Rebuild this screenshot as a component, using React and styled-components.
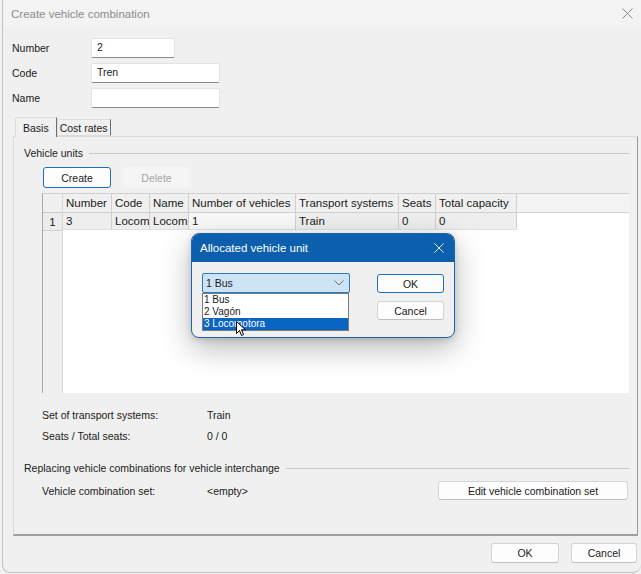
import styled, { createGlobalStyle } from "styled-components";

const GlobalStyle = createGlobalStyle`
  html, body { margin: 0; padding: 0; background: #f2f2f2; }
  body { font-family: "Liberation Sans", Arial, sans-serif; color: #1a1a1a; }
`;

const Window = styled.div`
  position: relative;
  box-sizing: border-box;
  margin-left: 2px;
  width: 639px;
  height: 573px;
  background: #f0f0f0;
  border: 1px solid #c2c2c2;
  border-top: none;
  border-right: none;
  border-radius: 0 0 8px 8px;
  display: flex;
  flex-direction: column;
`;

const TitleBar = styled.div`
  height: 27px;
  flex-shrink: 0;
  background: #f3f3f3;
  display: flex;
  align-items: center;
  justify-content: space-between;
  padding: 0 8px 0 8px;
  font-size: 11.5px;
  color: #8c8c8c;
`;

const CloseGlyph = ({ color = "#8a8a8a", size = 11 }) => (
  <svg width={size} height={size} viewBox="0 0 11 11">
    <path d="M0.5 0.5 L10.5 10.5 M10.5 0.5 L0.5 10.5" stroke={color} strokeWidth="1" fill="none" />
  </svg>
);

const Form = styled.div`
  display: grid;
  grid-template-columns: 79px auto;
  row-gap: 5px;
  padding: 11px 0 0 9px;
  font-size: 10.5px;
  align-items: center;
`;

const Label = styled.div`
  color: #1a1a1a;
`;

const Field = styled.div`
  box-sizing: border-box;
  width: ${(p) => p.$w}px;
  height: 20px;
  background: #fff;
  border: 1px solid #e3e3e3;
  border-bottom: 1px solid #8a8a8a;
  border-radius: 2px;
  padding: 2px 0 0 5px;
  font-size: 10.5px;
`;

const TabStrip = styled.div`
  display: flex;
  align-items: flex-end;
  margin: 9px 0 0 12px;
  height: 19px;
  font-size: 10.5px;
  position: relative;
  z-index: 1;
`;

const Tab = styled.div`
  box-sizing: border-box;
  height: ${(p) => (p.$active ? 20 : 17)}px;
  padding: 0 ${(p) => (p.$active ? 7 : 2)}px;
  display: flex;
  align-items: center;
  background: #f0f0f0;
  border: 1px solid #dcdcdc;
  border-bottom: ${(p) => (p.$active ? "none" : "1px solid #dcdcdc")};
  border-right: 1px solid #6e6e6e;
  margin-bottom: ${(p) => (p.$active ? -1 : 0)}px;
`;

const Panel = styled.div`
  box-sizing: border-box;
  margin: 0 3px 0 10px;
  height: 400px;
  border: 1px solid #dadada;
  border-right: 1px solid #9a9a9a;
  border-bottom: 2px solid #a0a0a0;
  padding: 9px 8px 0 10px;
  display: flex;
  flex-direction: column;
  font-size: 10.5px;
`;

const Legend = styled.div`
  display: flex;
  align-items: center;
  height: 14px;
  margin-top: ${(p) => p.$top || 0}px;
  gap: 6px;
  &::after {
    content: "";
    flex: 1;
    height: 1px;
    background: #c8c8c8;
  }
`;

const ButtonRow = styled.div`
  display: flex;
  gap: 12px;
  margin: 7px 0 0 19px;
`;

const Button = styled.button`
  box-sizing: border-box;
  width: ${(p) => p.$w}px;
  height: ${(p) => p.$h || 21}px;
  font-family: "Liberation Sans", Arial, sans-serif;
  font-size: 10.5px;
  color: ${(p) => (p.$disabled ? "#a6a6a6" : "#1a1a1a")};
  background: ${(p) => (p.$disabled ? "#f5f5f5" : "#fdfdfd")};
  border: 1px solid ${(p) => (p.$primary ? "#1b6ec2" : p.$disabled ? "#f5f5f5" : "#d4d4d4")};
  border-bottom-color: ${(p) => (p.$primary ? "#1b6ec2" : p.$disabled ? "#f5f5f5" : "#c0c0c0")};
  border-radius: 3px;
  padding: 0;
`;

const TableFrame = styled.div`
  box-sizing: border-box;
  margin: 5px 0 0 18px;
  height: 200px;
  display: flex;
  border-left: 1px solid #a8a8a8;
  border-top: 1px solid #d0d0d0;
  font-size: 11.5px;
`;

const RowHeaders = styled.div`
  width: 19px;
  background: #f0f0f0;
  border-right: 1px solid #d6d6d6;
  display: flex;
  flex-direction: column;
`;

const Corner = styled.div`
  height: 18px;
  border-bottom: 1px solid #c8c8c8;
`;

const RowNum = styled.div`
  height: 17px;
  display: flex;
  align-items: center;
  justify-content: center;
  border-bottom: 1px solid #d0d0d0;
  background: #ececec;
`;

const Grid = styled.div`
  flex: 1;
  background: #fff;
  display: flex;
  flex-direction: column;
`;

const HeaderRow = styled.div`
  display: flex;
  height: 18px;
  background: #f3f3f3;
  border-bottom: 1px solid #d0d0d0;
`;

const DataRow = styled.div`
  display: flex;
  height: 17px;
`;

const Cell = styled.div`
  box-sizing: border-box;
  width: ${(p) => p.$w}px;
  flex-shrink: 0;
  padding-left: 3px;
  display: flex;
  align-items: center;
  white-space: nowrap;
  overflow: hidden;
  border-right: 1px solid #d0d0d0;
  border-bottom: ${(p) => (p.$body ? "1px solid #e0e0e0" : "none")};
  background: ${(p) => (p.$body ? (p.$edit ? "#f8f8f8" : "#eeeeee") : "#f0f0f0")};
`;

const InfoGrid = styled.div`
  display: grid;
  grid-template-columns: 165px auto;
  grid-auto-rows: 21px;
  align-items: center;
  margin: 11px 0 0 18px;
`;

const SetRow = styled.div`
  display: grid;
  grid-template-columns: 165px 1fr auto;
  align-items: center;
  margin: 6px 1px 0 18px;
`;

const Footer = styled.div`
  display: flex;
  justify-content: flex-end;
  gap: 12px;
  margin: 7px 4px 0 0;
`;

const Dialog = styled.div`
  position: absolute;
  left: 188px;
  top: 233px;
  width: 264px;
  height: 105px;
  box-sizing: border-box;
  background: #f0f0f0;
  border: 1px solid #1d64ad;
  border-radius: 8px;
  box-shadow: 0 10px 30px rgba(0, 0, 0, 0.28), 0 2px 6px rgba(0, 0, 0, 0.15);
  font-size: 10.5px;
`;

const DialogTitle = styled.div`
  height: 28px;
  background: #0b5fad;
  border-radius: 7px 7px 0 0;
  color: #fff;
  font-size: 11.5px;
  display: flex;
  align-items: center;
  justify-content: space-between;
  padding: 0 10px 0 8px;
`;

const DialogBody = styled.div`
  position: relative;
  display: flex;
  justify-content: space-between;
  padding: 11px 10px 0 10px;
`;

const Combo = styled.div`
  box-sizing: border-box;
  width: 148px;
  height: 20px;
  background: #cde4f7;
  border: 1px solid #2b79c2;
  border-radius: 2px;
  display: flex;
  align-items: center;
  justify-content: space-between;
  padding: 0 5px 0 3px;
`;

const DropList = styled.div`
  position: absolute;
  left: 10px;
  top: 31px;
  width: 147px;
  box-sizing: border-box;
  background: #fff;
  border: 1px solid #7a7a7a;
  display: flex;
  flex-direction: column;
  font-size: 10px;
`;

const DropItem = styled.div`
  height: 12px;
  line-height: 12px;
  padding-left: 1px;
  background: ${(p) => (p.$sel ? "#0a64c2" : "transparent")};
  color: ${(p) => (p.$sel ? "#fff" : "#1a1a1a")};
`;

const DialogButtons = styled.div`
  display: flex;
  flex-direction: column;
  gap: 8px;
  padding-top: 1px;
`;

const Cursor = styled.svg`
  position: absolute;
  left: 44px;
  top: 59px;
`;

const columns = [
  ["Number", 49, "3"],
  ["Code", 38, "Locom"],
  ["Name", 39, "Locom"],
  ["Number of vehicles", 107, "1", true],
  ["Transport systems", 103, "Train"],
  ["Seats", 37, "0"],
  ["Total capacity", 81, "0"],
];

export default function App() {
  return (
    <>
      <GlobalStyle />
      <Window>
        <TitleBar>
          <span>Create vehicle combination</span>
          <CloseGlyph />
        </TitleBar>

        <Form>
          <Label>Number</Label>
          <Field $w={84}>2</Field>
          <Label>Code</Label>
          <Field $w={129}>Tren</Field>
          <Label>Name</Label>
          <Field $w={129}></Field>
        </Form>

        <TabStrip>
          <Tab $active>Basis</Tab>
          <Tab>Cost rates</Tab>
        </TabStrip>

        <Panel>
          <Legend>Vehicle units</Legend>
          <ButtonRow>
            <Button $w={68} $primary>Create</Button>
            <Button $w={67} $disabled>Delete</Button>
          </ButtonRow>

          <TableFrame>
            <RowHeaders>
              <Corner />
              <RowNum>1</RowNum>
            </RowHeaders>
            <Grid>
              <HeaderRow>
                {columns.map(([h, w]) => (
                  <Cell key={h} $w={w}>{h}</Cell>
                ))}
              </HeaderRow>
              <DataRow>
                {columns.map(([h, w, v, edit]) => (
                  <Cell key={h} $w={w} $body $edit={edit}>{v}</Cell>
                ))}
              </DataRow>
            </Grid>
          </TableFrame>

          <InfoGrid>
            <span>Set of transport systems:</span>
            <span>Train</span>
            <span>Seats / Total seats:</span>
            <span>0 / 0</span>
          </InfoGrid>

          <Legend $top={15}>Replacing vehicle combinations for vehicle interchange</Legend>
          <SetRow>
            <span>Vehicle combination set:</span>
            <span>&lt;empty&gt;</span>
            <Button $w={190} $h={19}>Edit vehicle combination set</Button>
          </SetRow>
        </Panel>

        <Footer>
          <Button $w={68} $h={20}>OK</Button>
          <Button $w={66} $h={20}>Cancel</Button>
        </Footer>

        <Dialog>
          <DialogTitle>
            <span>Allocated vehicle unit</span>
            <CloseGlyph color="#ffffff" size={10} />
          </DialogTitle>
          <DialogBody>
            <Combo>
              <span>1 Bus</span>
              <svg width="10" height="6" viewBox="0 0 10 6">
                <path d="M0.5 0.5 L5 5 L9.5 0.5" stroke="#6b6b6b" strokeWidth="1" fill="none" />
              </svg>
            </Combo>
            <DialogButtons>
              <Button $w={67} $h={19} $primary>OK</Button>
              <Button $w={67} $h={19}>Cancel</Button>
            </DialogButtons>
            <DropList>
              <DropItem>1 Bus</DropItem>
              <DropItem>2 Vagón</DropItem>
              <DropItem $sel>3 Locomotora</DropItem>
            </DropList>
            <Cursor width="10" height="16" viewBox="0 0 10 16">
              <path d="M0.5 0.5 L0.5 12.5 L3.5 9.5 L5.5 14.5 L7.5 13.5 L5.5 8.8 L9.5 8.8 Z" fill="#fff" stroke="#000" strokeWidth="1" />
            </Cursor>
          </DialogBody>
        </Dialog>
      </Window>
    </>
  );
}
